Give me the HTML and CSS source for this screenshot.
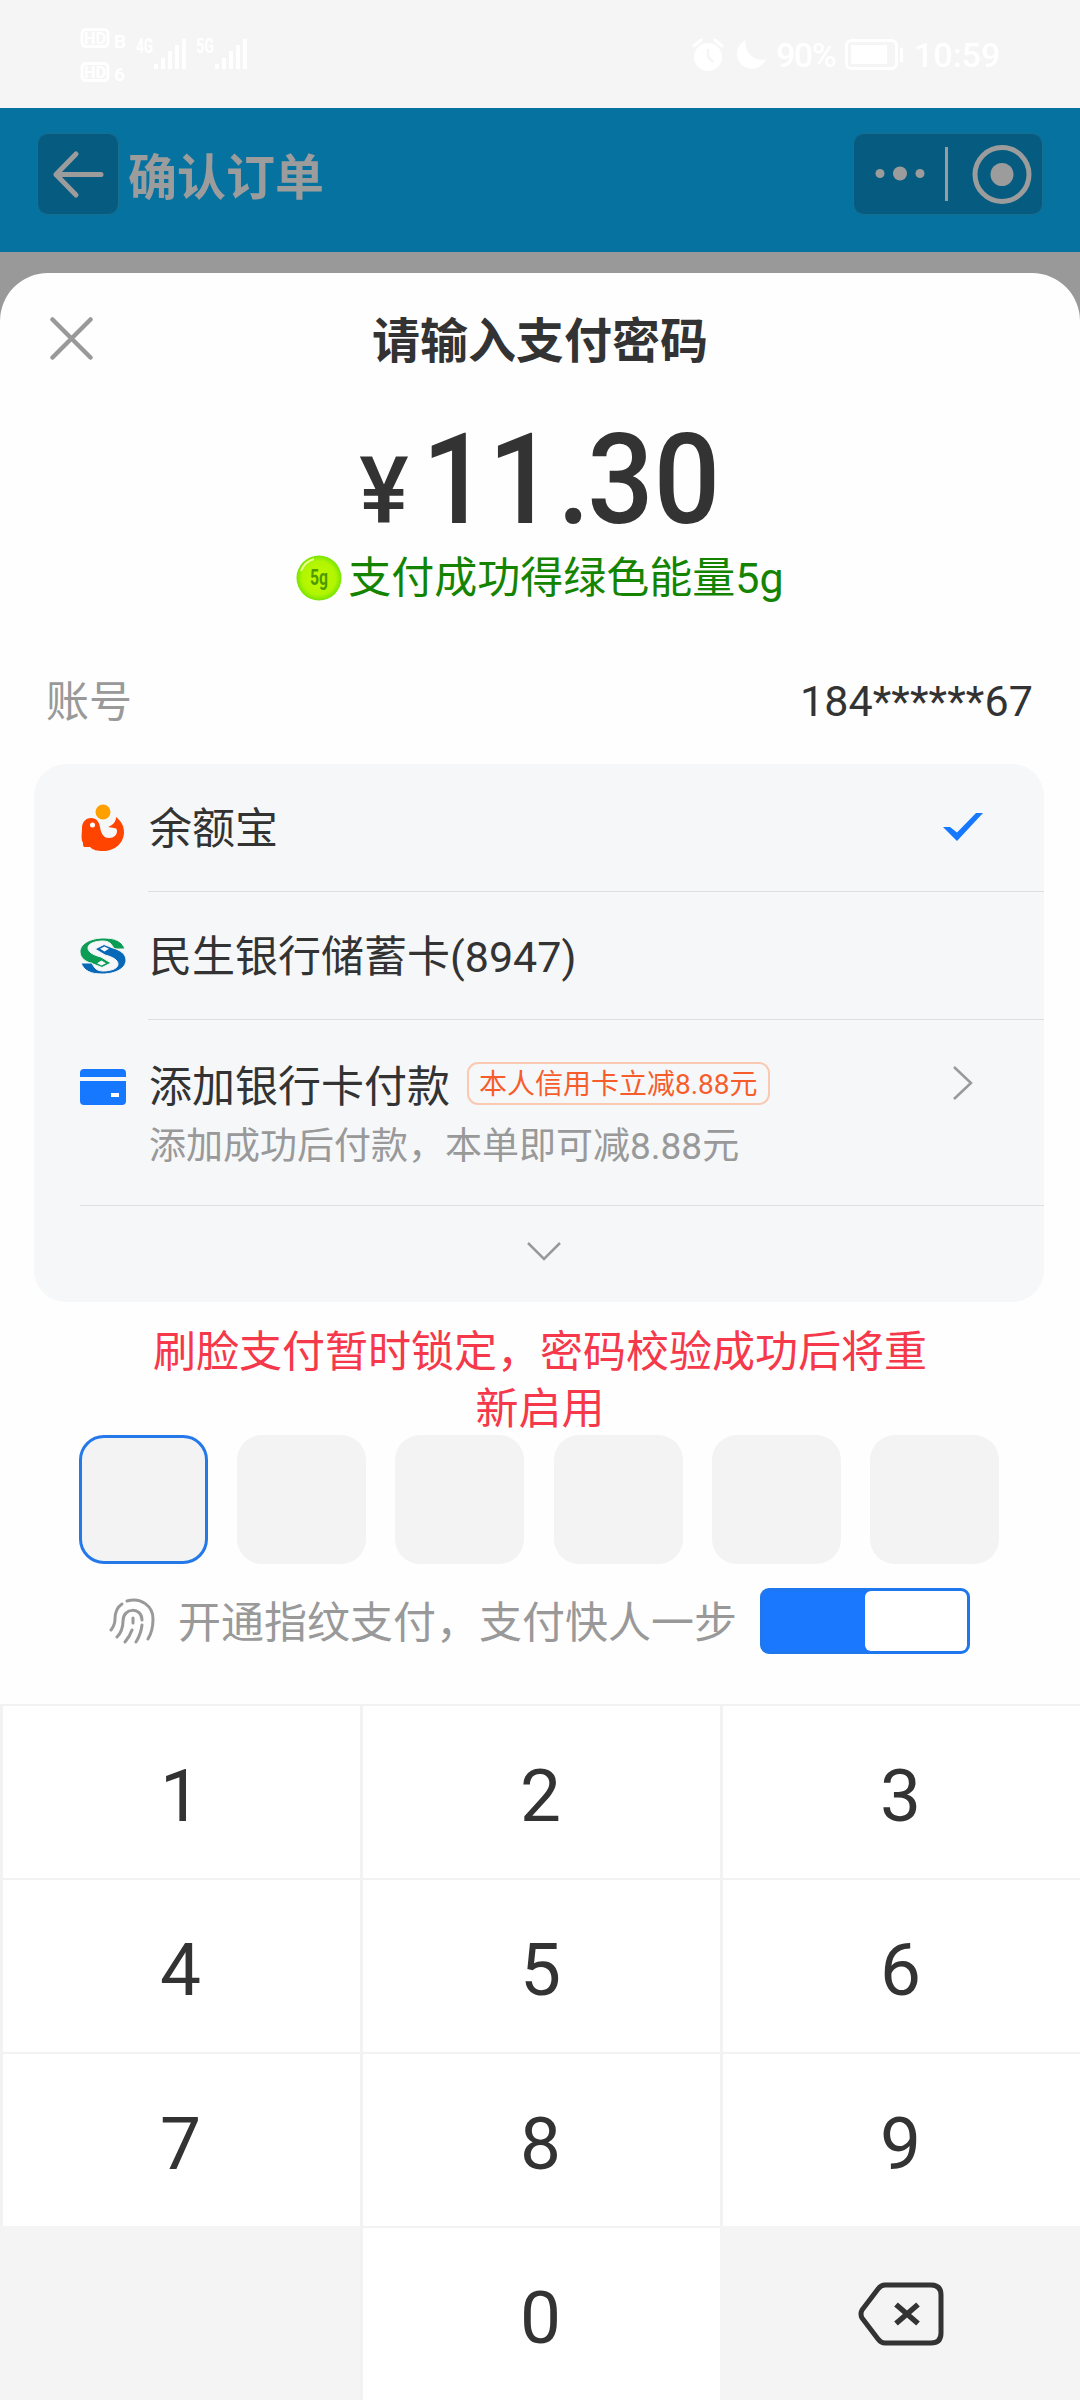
FILE: index.html
```html
<!DOCTYPE html>
<html lang="zh-CN">
<head>
<meta charset="utf-8">
<title>请输入支付密码</title>
<link rel="stylesheet" href="styles.css">
</head>
<body>
<div class="status">
  <svg class="signals" width="180" height="64" viewBox="0 0 180 64" fill="#fff">
    <rect x="3" y="2.500" width="26" height="17" rx="4" fill="none" stroke="#fff" stroke-width="3"/>
    <text x="5" y="17" class="tiny" textLength="22" lengthAdjust="spacingAndGlyphs">HD</text><text x="35" y="21" class="small">B</text>
    <rect x="3" y="36.500" width="26" height="17" rx="4" fill="none" stroke="#fff" stroke-width="3"/>
    <text x="5" y="51" class="tiny" textLength="22" lengthAdjust="spacingAndGlyphs">HD</text><text x="35" y="54" class="small">6</text>
    <text x="57" y="26" class="net" textLength="17" lengthAdjust="spacingAndGlyphs">4G</text>
    <path d="M75 37h4v5h-4zM82 31h4v11h-4zM89 24h4v18h-4zM96 18h4v24h-4zM103 12h4v30h-4z"/>
    <text x="117" y="26" class="net" textLength="18" lengthAdjust="spacingAndGlyphs">5G</text>
    <path d="M136 37h4v5h-4zM143 31h4v11h-4zM150 24h4v18h-4zM157 18h4v24h-4zM164 12h4v30h-4z"/>
  </svg>
  <div class="status-right">
    <svg width="32" height="34" viewBox="0 0 32 34">
      <circle cx="16" cy="19" r="14" fill="#fff"/>
      <path d="M2 8l7-6M30 8l-7-6" stroke="#fff" stroke-width="3" stroke-linecap="round"/>
      <path d="M16 11v8l5 5" fill="none" stroke="#f5f5f5" stroke-width="2.5"/>
    </svg>
    <svg class="moon" width="32" height="32" viewBox="0 0 32 32"><path d="M11 1A15 15 0 1 0 31 20A16 16 0 0 1 11 1z" fill="#fff"/></svg>
    <span class="percent">90%</span>
    <svg class="battery" width="60" height="32" viewBox="0 0 60 32"><rect x="1.5" y="1.5" width="50" height="28" rx="5" fill="none" stroke="#fff" stroke-width="3"/><rect x="6" y="6" width="36" height="19" fill="#fff"/><path d="M55 9h3v14h-3z" fill="#fff"/></svg>
    <span class="clock">10:59</span>
  </div>
</div>
<header class="navbar">
  <div class="back"><svg width="80" height="80" viewBox="0 0 80 80" fill="none" stroke="#9c9c9c" stroke-width="5" stroke-linecap="round" stroke-linejoin="round"><path d="M38 20L18 40.500 38 61M18 40.500h45"/></svg></div>
  <h1 class="nav-title">确认订单</h1>
  <div class="capsule"><svg width="188" height="80" viewBox="0 0 188 80" fill="#9c9c9c"><circle cx="26" cy="39.500" r="4.500"/><circle cx="46" cy="39.500" r="7"/><circle cx="66" cy="39.500" r="4.500"/><rect x="91" y="13" width="3" height="54"/><circle cx="148" cy="40.500" r="27" fill="none" stroke="#9c9c9c" stroke-width="5"/><circle cx="148" cy="40.500" r="11.500"/></svg></div>
</header>
<main class="sheet">
  <div class="sheet-head">
    <svg class="close" width="44" height="44" viewBox="0 0 44 44"><path d="M2.500 2.500l38 38M40.500 2.500l-38 38" stroke="#999" stroke-width="4.500" stroke-linecap="round"/></svg>
    <h2 class="sheet-title">请输入支付密码</h2>
  </div>
  <div class="amount"><span class="yen">¥</span><span class="value">11<span class="dot">.</span>30</span></div>
  <div class="energy">
    <svg width="46" height="46" viewBox="0 0 46 46"><defs><radialGradient id="g"><stop offset="0" stop-color="#c4fa00"/><stop offset=".75" stop-color="#b0f500"/><stop offset="1" stop-color="#76e400"/></radialGradient></defs><circle cx="23" cy="23" r="22.500" fill="url(#g)"/><path d="M5 16A20 20 0 0 1 18 4" fill="none" stroke="#ecff90" stroke-width="2"/><text x="14" y="30" class="orb" textLength="18" lengthAdjust="spacingAndGlyphs">5g</text></svg>
    <span>支付成功得绿色能量5g</span>
  </div>
  <div class="account"><span class="label">账号</span><span class="number">184******67</span></div>
  <section class="card">
    <div class="method">
      <svg class="logo" width="48" height="48" viewBox="0 0 48 48"><circle cx="24" cy="8" r="7.500" fill="#ff9f00"/><path d="M3 24C3 17 8 14 12 14c6 0 8 4 9 9 1 6 3 11 9 11 5 0 8-3 8-7 0-2-1-3-3-3l-6-1c5-2 8-5 8-10 4 3 8 8 8 15 0 11-9 19-21 19-6 0-10-1-13-4l-6 0c-2-2 0-4-2-6C2 32 3 28 3 24z" fill="#ff4400"/><circle cx="13.500" cy="21" r="2.500" fill="#fff"/></svg>
      <div class="body"><span class="name">余额宝</span><svg class="mark" width="42" height="30" viewBox="0 0 42 30"><path d="M1 14h7l7 5.500L34 0h7L15 28z" fill="#1677ff"/></svg></div>
    </div>
    <div class="method">
      <svg class="logo" width="48" height="38" viewBox="-1 -1 48 38"><defs><path id="half" d="M45 11C42 3 35 0 24 0 10 0 0 6 0 14c0 6 6 10 13 12l9 3.500 9-4.500-10-6C13 17 8 14 8 10c0-5 8-7 15-7 6 0 9 3 11 8z"/></defs><g stroke="#f5f7f9" stroke-width="1"><use href="#half" fill="#0b9c56"/><use href="#half" fill="#0868b8" transform="rotate(180 23 18)"/></g><path d="M17 25.200l4.500-2.700 4.500 2.700-4.500 2.300zM20 10.800l4.500-2.300 4.500 2.300-4.500 2.700z" fill="#f5f7f9"/></svg>
      <div class="body"><span class="name">民生银行储蓄卡(8947)</span></div>
    </div>
    <div class="method tall">
      <svg class="logo" width="48" height="36" viewBox="0 0 48 36"><path d="M1 8V4q0-4 4-4h38q4 0 4 4v4zM1 12h46v20q0 4-4 4H5q-4 0-4-4z" fill="#1677ff"/><rect x="32" y="24" width="8" height="4" fill="#fff"/></svg>
      <div class="body"><div class="texts"><div class="line"><span class="name">添加银行卡付款</span><span class="tag">本人信用卡立减8.88元</span></div><div class="sub">添加成功后付款，本单即可减8.88元</div></div><svg class="arrow" width="22" height="36" viewBox="0 0 22 36"><path d="M2 2l17 16L2 34" fill="none" stroke="#999" stroke-width="2.500"/></svg></div>
    </div>
    <div class="more"><svg width="36" height="20" viewBox="0 0 36 20"><path d="M2 1l16 16L34 1" fill="none" stroke="#999" stroke-width="2.500"/></svg></div>
  </section>
  <p class="warning">刷脸支付暂时锁定，密码校验成功后将重<br>新启用</p>
  <div class="pins"><i class="pin active"></i><i class="pin"></i><i class="pin"></i><i class="pin"></i><i class="pin"></i><i class="pin"></i></div>
  <div class="finger">
    <svg width="48" height="48" viewBox="0 0 48 48" fill="none" stroke="#999" stroke-width="3" stroke-linecap="round"><path d="M14 7C8 11 7 16 7 22q0 6-4 11M19 4C33 0 45 9 45 22q0 12-5 20M9 40q6-6 6-16c0-14 19-14 19-1M17 45q5-6 7-12M34 28q-1 9-6 17M25 21v5"/></svg>
    <span class="finger-text">开通指纹支付，支付快人一步</span>
    <span class="toggle"><i class="knob"></i></span>
  </div>
</main>
<div class="keypad">
  <div class="key">1</div><div class="key">2</div><div class="key">3</div>
  <div class="key">4</div><div class="key">5</div><div class="key">6</div>
  <div class="key">7</div><div class="key">8</div><div class="key">9</div>
  <div class="key blank"></div><div class="key">0</div>
  <div class="key blank"><svg class="delete" width="86" height="64" viewBox="0 0 86 64" fill="none" stroke="#333" stroke-width="5"><path d="M27 3h46q10 0 10 10v38q0 10-10 10H27q-4 0-7-4L4 36q-2-4 0-8L20 7q3-4 7-4z"/><path d="M38 22.500l22 19M60 22.500l-22 19" stroke-width="5.500"/></svg></div>
</div>
</body>
</html>
```
FILE: styles.css
```css
* { box-sizing: border-box; }
body { margin: 0; width: 1080px; height: 2400px; overflow: hidden; background: #999; color: #333; font-family: Roboto, "Noto Sans CJK SC", sans-serif; font-size: 43px; display: flex; flex-direction: column; }
svg { display: block; flex: none; }
h1, h2, p { margin: 0; }
.status { height: 108px; flex: none; background: #f5f5f5; color: #fff; display: flex; justify-content: space-between; padding: 27px 83px 0 79px; }
.tiny { font: bold 17px Roboto, sans-serif; }
.small { font: bold 19px Roboto, sans-serif; }
.net { font: bold 20px Roboto, sans-serif; }
.status-right { display: flex; align-items: center; height: 56px; font-size: 34px; font-weight: 500; }
.moon { margin-left: 11px; }
.percent { margin-left: 9px; width: 62px; letter-spacing: -1.5px; }
.battery { margin-left: 7px; }
.clock { margin-left: 9px; width: 83px; }
.navbar { height: 144px; flex: none; background: #0672a0; display: flex; align-items: center; padding: 0 37px; }
.back, .capsule { border: 1px solid #1a6e90; background: #065c80; border-radius: 11px; height: 82px; margin-top: -12px; }
.back { width: 82px; }
.capsule { width: 190px; margin-left: auto; }
.nav-title { font-size: 49px; line-height: 60px; font-weight: 700; color: #9c9c9c; margin: -2px 0 0 9px; }
.sheet { margin-top: 21px; height: 1431px; flex: none; background: #fefefe; border-radius: 48px 48px 0 0; display: flex; flex-direction: column; }
.sheet-head { height: 135px; flex: none; padding: 0 50px; display: grid; grid-template-columns: 44px 1fr 44px; align-items: center; }
.close { margin-top: -3px; }
.sheet-title { font-size: 48px; line-height: 60px; font-weight: 700; text-align: center; padding-top: 3px; }
.amount { height: 142px; flex: none; display: flex; justify-content: center; align-items: baseline; line-height: 143px; font-weight: 500; padding-left: 12px; }
.yen { font-size: 93px; }
.value { font-size: 127px; transform: scaleX(.92); }
.dot { margin: 0 -3px 0 3px; }
.energy { height: 56px; flex: none; display: flex; justify-content: center; align-items: center; gap: 6px; line-height: 56px; color: #148400; }
.orb { font: bold 22px Roboto, sans-serif; fill: #4c9a00; }
.account { height: 64px; flex: none; margin: 64px 47px 0 46px; display: flex; justify-content: space-between; line-height: 64px; }
.label { color: #999; }
.number { line-height: 62px; letter-spacing: .1px; }
.card { margin: 30px 36px 0 34px; height: 538px; flex: none; background: #f5f7f9; border-radius: 32px; display: flex; flex-direction: column; padding-left: 45px; }
.method { height: 128px; display: flex; align-items: center; }
.body { margin-left: 21px; flex: 1; height: 100%; border-bottom: 1px solid #dedfe1; display: flex; align-items: center; justify-content: space-between; padding-left: 1px; }
.name { line-height: 60px; padding-top: 3px; }
.mark { margin-right: 60px; }
.method.tall { height: 185px; align-items: flex-start; }
.method.tall .logo { margin-top: 49px; }
.tall .body { align-items: flex-start; border-bottom: 0; }
.line { display: flex; margin-top: 34px; gap: 17px; }
.tag { height: 43px; margin-top: 8px; border: 2px solid #fbc9b2; border-radius: 11px; padding: 1px 10px 0; line-height: 40px; font-size: 28px; color: #f75d2b; }
.sub { font-size: 37px; line-height: 54px; color: #999; margin-top: 3px; }
.arrow { margin: 45px 70px 0 0; }
.more { border-top: 1px solid #dedfe1; flex: 1; display: flex; justify-content: center; padding: 36px 36px 0 0; margin-left: 1px; }
.warning { height: 133px; flex: none; padding-top: 22px; text-align: center; line-height: 57px; color: #f5384a; }
.pins { height: 129px; flex: none; margin: 0 81px 0 79px; display: flex; justify-content: space-between; }
.pin { width: 129px; height: 129px; border-radius: 25px; background: #f3f3f3; }
.active { border: 3px solid #2478e8; }
.finger { display: flex; align-items: center; height: 66px; margin: 24px 0 0 108px; color: #999; }
.finger-text { margin-left: 22px; line-height: 66px; width: 582px; white-space: nowrap; padding-top: 4px; }
.toggle { width: 210px; height: 66px; border: 3px solid #1f77ee; background: #1a78ff; border-radius: 9px; display: flex; justify-content: flex-end; }
.knob { width: 102px; background: #fff; border-radius: 6px; }
.keypad { height: 696px; flex: none; display: grid; grid-template-columns: repeat(3, 1fr); grid-template-rows: repeat(4, 174px); }
.key { background: #fff; border-top: 2px solid #f2f2f2; border-left: 3px solid #f2f2f2; display: flex; align-items: center; justify-content: center; font-size: 73px; padding: 8px 2px 0 0; }
.blank { background: #f4f4f4; border-color: #f4f4f4; }
.delete { margin-top: -8px; }
```
